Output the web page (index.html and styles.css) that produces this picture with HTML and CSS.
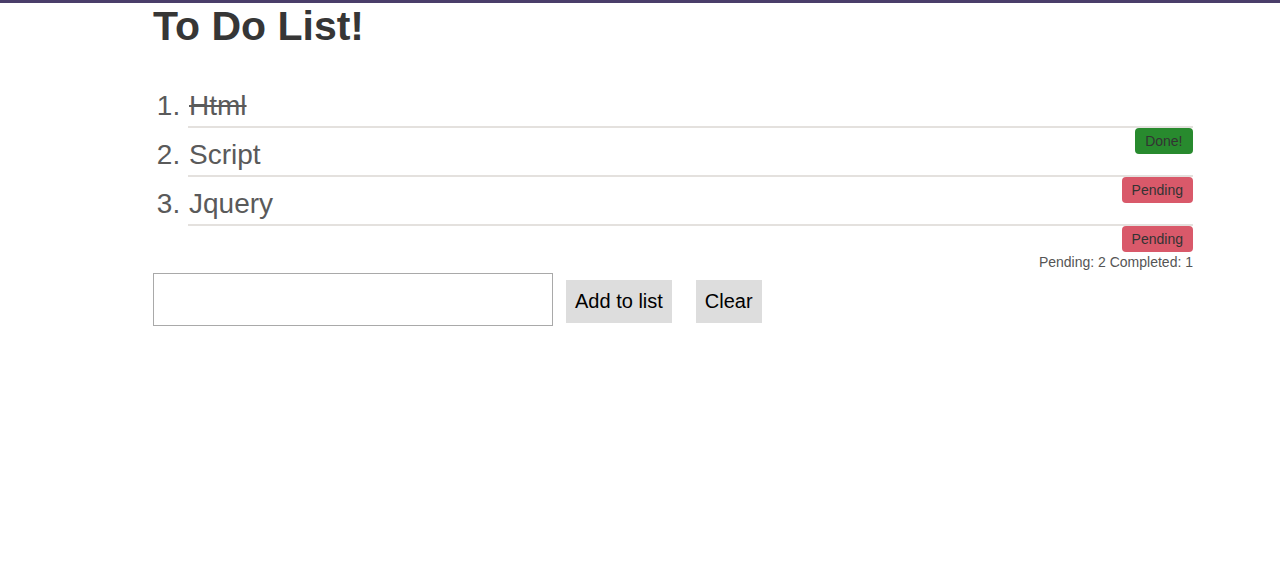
FILE: index.html
```html
<!DOCTYPE html>
<html>
<head>
<meta charset="utf-8">
<title>To Do List</title>
<link rel="stylesheet" href="styles.css">
</head>
<body>
<div class="page">
  <h1 class="title">To Do List!</h1>
  <ol class="todo-list">
    <li class="todo">
      <div class="todo-text done">Html</div>
      <div class="badge-row"><span class="badge badge-done">Done!</span></div>
    </li>
    <li class="todo">
      <div class="todo-text">Script</div>
      <div class="badge-row"><span class="badge badge-pending">Pending</span></div>
    </li>
    <li class="todo">
      <div class="todo-text">Jquery</div>
      <div class="badge-row"><span class="badge badge-pending">Pending</span></div>
    </li>
  </ol>
  <div class="stats">Pending: 2 Completed: 1</div>
  <div class="controls">
    <input class="new-item" type="text">
    <button class="btn btn-add">Add to list</button>
    <button class="btn btn-clear">Clear</button>
  </div>
</div>
</body>
</html>
```
FILE: styles.css
```css
html, body {
  margin: 0;
  padding: 0;
  background: #fff;
}
body {
  border-top: 3px solid #4a3e6a;
  font-family: "Liberation Sans", Arial, sans-serif;
}
.page {
  margin-left: 153px;
  width: 1040px;
}
.title {
  margin: 0;
  font-size: 41px;
  line-height: 46px;
  font-weight: bold;
  color: #363636;
}
.todo-list {
  margin: 42px 0 0 0;
  padding-left: 35px;
  color: #5a5a5a;
  font-size: 28px;
}
.todo {
  line-height: 30px;
}
.todo-text {
  line-height: 30px;
  padding-bottom: 5px;
  border-bottom: 2px solid #e4e1de;
  padding-left: 1px;
}
.todo-text.done {
  text-decoration: line-through;
}
.badge-row {
  height: 12px;
  text-align: right;
  line-height: 0;
}
.badge {
  display: inline-block;
  height: 26px;
  line-height: 26px;
  padding: 0 10px;
  border-radius: 4px;
  font-size: 14px;
  color: #333;
  position: relative;
  z-index: 1;
}
.badge-done {
  background: #288a2e;
  padding: 0 10.5px;
}
.badge-pending {
  background: #d9596a;
}
.stats {
  margin-top: 16px;
  text-align: right;
  font-size: 14px;
  line-height: 16px;
  color: #555;
}
.controls {
  display: flex;
  align-items: flex-start;
  margin-top: 3px;
}
.new-item {
  box-sizing: border-box;
  width: 400px;
  height: 53px;
  margin: 0;
  border: 1px solid #a9a9a9;
  font-size: 20px;
  padding: 0 6px;
}
.btn {
  margin: 7px 0 0 0;
  border: none;
  background: #dddddd;
  color: #000;
  font-family: "Liberation Sans", Arial, sans-serif;
  font-size: 20px;
  line-height: 23px;
  padding: 10px 9px;
}
.btn-add {
  margin-left: 13px;
}
.btn-clear {
  margin-left: 24px;
}
```
